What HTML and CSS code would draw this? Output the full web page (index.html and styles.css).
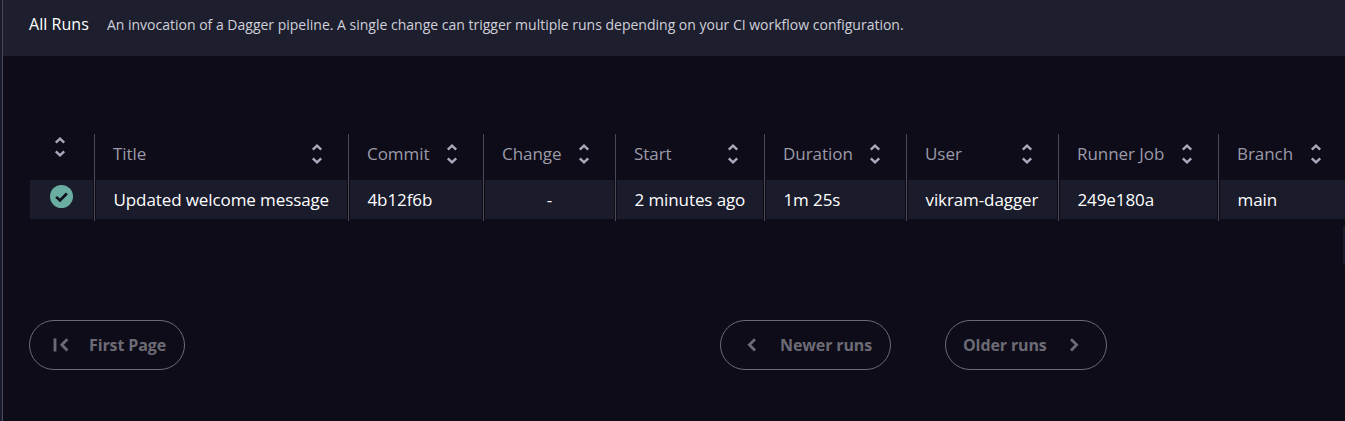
FILE: index.html
```html
<!DOCTYPE html>
<html lang="en">
<head>
<meta charset="utf-8">
<title>All Runs</title>
<link rel="stylesheet" href="styles.css">
</head>
<body>
<svg class="defs" aria-hidden="true">
  <symbol id="sort" viewBox="0 0 12 20"><path d="M1.8 5.6 6 1.7l4.2 3.9M1.8 14.4 6 18.3l4.2-3.9"/></symbol>
</svg>
<main class="page">
  <header class="topbar">
    <h1 class="title">All Runs</h1>
    <p class="description">An invocation of a Dagger pipeline. A single change can trigger multiple runs depending on your CI workflow configuration.</p>
  </header>
  <section class="runs">
    <div class="col status">
      <div class="head"><svg class="sort"><use href="#sort"/></svg></div>
      <div class="cell"><svg class="check" viewBox="0 0 24 24"><circle cx="12" cy="12" r="12"/><path d="m6.4 12.4 4 3.7 7.2-7.2"/></svg></div>
    </div>
    <div class="col"><div class="head"><span>Title</span><svg class="sort"><use href="#sort"/></svg></div><div class="cell"><span>Updated welcome message</span></div></div>
    <div class="col"><div class="head"><span>Commit</span><svg class="sort"><use href="#sort"/></svg></div><div class="cell"><span>4b12f6b</span></div></div>
    <div class="col change"><div class="head"><span>Change</span><svg class="sort"><use href="#sort"/></svg></div><div class="cell"><span>-</span></div></div>
    <div class="col"><div class="head"><span>Start</span><svg class="sort"><use href="#sort"/></svg></div><div class="cell"><span>2 minutes ago</span></div></div>
    <div class="col"><div class="head"><span>Duration</span><svg class="sort"><use href="#sort"/></svg></div><div class="cell"><span>1m 25s</span></div></div>
    <div class="col"><div class="head"><span>User</span><svg class="sort"><use href="#sort"/></svg></div><div class="cell"><span>vikram-dagger</span></div></div>
    <div class="col"><div class="head"><span>Runner Job</span><svg class="sort"><use href="#sort"/></svg></div><div class="cell"><span>249e180a</span></div></div>
    <div class="col last"><div class="head"><span>Branch</span><svg class="sort"><use href="#sort"/></svg></div><div class="cell"><span>main</span></div></div>
  </section>
  <div class="edge"></div>
  <nav class="pager">
    <button class="btn first"><svg class="arrow wide" viewBox="0 0 16 16"><path d="M2 1.5v13M14.4 2.2 8.8 7.8l5.6 5.6"/></svg><span>First Page</span></button>
    <button class="btn newer"><svg class="arrow" viewBox="0 0 10 16"><path d="M8 2.2 2.4 7.8 8 13.4"/></svg><span>Newer runs</span></button>
    <button class="btn older"><span>Older runs</span><svg class="arrow" viewBox="0 0 10 16"><path d="M2 2.2 7.6 7.8 2 13.4"/></svg></button>
  </nav>
</main>
</body>
</html>
```
FILE: styles.css
```css
* { box-sizing: border-box; }
html { background: #1a1b29; }
body {
  margin: 0;
  font-family: "Open Sans", "Noto Sans", sans-serif;
  color: #fff;
  overflow: hidden;
}
.defs { display: none; }
.page {
  height: 421px;
  margin-left: 2px;
  border-left: 1px solid #4a4866;
  background: #0d0c18;
}
.topbar {
  height: 56px;
  padding: 0 26px 7px;
  display: flex;
  align-items: center;
  gap: 18px;
  background: #1e1f2e;
}
.title, .description { margin: 0; font-weight: 400; white-space: nowrap; }
.title { font-size: 16px; letter-spacing: 0.05px; margin-top: -1px; }
.description { font-size: 14px; color: #d0d0da; }
.runs {
  margin: 78px 0 0 27px;
  height: 87px;
  display: grid;
  grid-template-columns: 65px 254px 135px 132px 149px 142px 152px 160px 126px;
}
.col {
  border-right: 1px solid #4b4953;
  padding: 0 1px;
  white-space: nowrap;
}
.col.status { padding-left: 0; }
.col.last { border-right: 0; padding-right: 0; }
.head {
  height: 46px;
  padding: 0 24px 7px 17px;
  display: flex;
  align-items: center;
  justify-content: space-between;
  font-size: 17px;
  letter-spacing: -0.05px;
  color: #9c9aa9;
}
.last .head { justify-content: flex-start; gap: 17px; padding-right: 0; }
.status .head { padding: 0 0 20px 24px; }
.sort { flex: none; width: 12px; height: 20px; fill: none; stroke: #aaa8ba; stroke-width: 2.5; }
.cell {
  height: 39px;
  padding-left: 17.5px;
  display: flex;
  align-items: center;
  background: #1a1b2b;
  font-size: 17px;
  letter-spacing: -0.1px;
}
.change .cell { justify-content: center; padding-left: 0; }
.status .cell { padding: 0 0 6px 20px; }
.check { width: 23px; height: 23px; fill: #6aaea1; }
.check path { fill: none; stroke: #10101c; stroke-width: 2.8; }
.edge { width: 2px; height: 39px; margin: 5px 0 0 auto; background: #1a1b2b; }
.pager { display: flex; margin: 55px 0 0 26px; }
.btn {
  height: 50px;
  padding: 0;
  display: flex;
  align-items: center;
  border: 1px solid #6c6b75;
  border-radius: 25px;
  background: none;
  color: #6c6b75;
  font: 700 16px "Open Sans", "Noto Sans", sans-serif;
  letter-spacing: -0.12px;
  white-space: nowrap;
}
.first { width: 156px; padding-left: 23px; gap: 20px; }
.newer { width: 171px; margin-left: 535px; padding-left: 26px; gap: 23px; }
.older { width: 162px; margin-left: 54px; padding-left: 17px; gap: 22px; }
.arrow { flex: none; width: 10px; height: 16px; fill: none; stroke: #6c6b75; stroke-width: 2.8; }
.arrow.wide { width: 16px; }
```
